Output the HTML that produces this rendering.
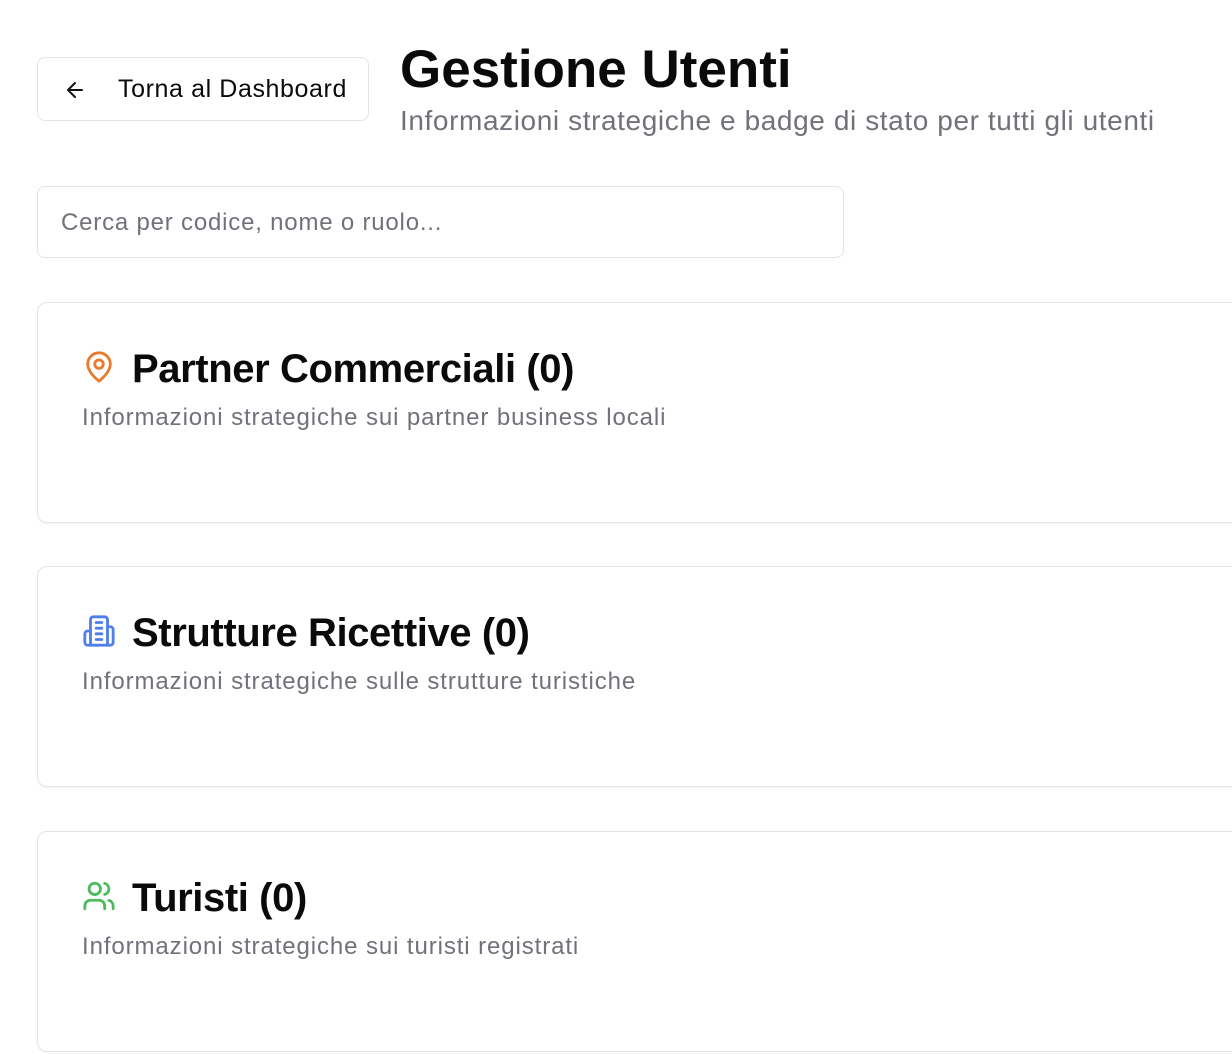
<!DOCTYPE html>
<html><head><meta charset="utf-8"><style>
body{margin:0;background:#fff;font-family:"Liberation Sans",sans-serif;color:#0a0a0a;width:1232px;height:1054px;overflow:hidden;position:relative}
.btn{position:absolute;left:37px;top:57px;width:332px;height:64px;border:1px solid #e4e4e7;border-radius:8px;box-sizing:border-box}
.btn svg{position:absolute;left:25px;top:20px}
.btn span{position:absolute;left:80px;top:17px;font-size:25px;letter-spacing:0.6px}
h1{position:absolute;left:400px;top:39px;margin:0;font-size:53px;font-weight:700;letter-spacing:0px}
.sub{position:absolute;left:400px;top:105px;font-size:28px;color:#71717a;letter-spacing:0.6px}
.search{position:absolute;left:37px;top:186px;width:807px;height:72px;border:1px solid #e4e4e7;border-radius:8px;box-sizing:border-box;font-size:24px;color:#71717a;padding:22px 0 0 23px;letter-spacing:0.8px}
.card{position:absolute;left:37px;width:1220px;height:221px;border:1px solid #e4e4e7;border-radius:10px;box-sizing:border-box;box-shadow:0 1px 2px rgba(0,0,0,.05)}
.card svg{position:absolute;left:44px;top:47px}
.card .t{position:absolute;left:94px;top:44px;font-size:40px;font-weight:700;letter-spacing:-0.4px}
.card .d{position:absolute;left:44px;top:101px;font-size:24px;color:#71717a;letter-spacing:0.9px}
</style></head><body>
<div class="btn"><svg width="24" height="24" viewBox="0 0 24 24" fill="none" stroke="#111" stroke-width="2" stroke-linecap="round" stroke-linejoin="round"><path d="M19 12H5M12 19l-7-7 7-7"/></svg><span>Torna al Dashboard</span></div>
<h1>Gestione Utenti</h1>
<div class="sub">Informazioni strategiche e badge di stato per tutti gli utenti</div>
<div class="search">Cerca per codice, nome o ruolo...</div>

<div class="card" style="top:302px"><svg width="34" height="34" viewBox="0 0 24 24" fill="none" stroke="#ea7a2e" stroke-width="2" stroke-linecap="round" stroke-linejoin="round"><path d="M20 10c0 6-8 12-8 12s-8-6-8-12a8 8 0 0 1 16 0Z"/><circle cx="12" cy="10" r="3"/></svg><div class="t">Partner Commerciali (0)</div><div class="d">Informazioni strategiche sui partner business locali</div></div>

<div class="card" style="top:566px"><svg width="34" height="34" viewBox="0 0 24 24" fill="none" stroke="#4f7fe8" stroke-width="2" stroke-linecap="round" stroke-linejoin="round"><path d="M6 22V4a2 2 0 0 1 2-2h8a2 2 0 0 1 2 2v18Z"/><path d="M6 12H4a2 2 0 0 0-2 2v6a2 2 0 0 0 2 2h2"/><path d="M18 9h2a2 2 0 0 1 2 2v9a2 2 0 0 1-2 2h-2"/><path d="M10 6h4M10 10h4M10 14h4M10 18h4"/></svg><div class="t">Strutture Ricettive (0)</div><div class="d">Informazioni strategiche sulle strutture turistiche</div></div>

<div class="card" style="top:831px"><svg width="34" height="34" viewBox="0 0 24 24" fill="none" stroke="#4cbb5e" stroke-width="2" stroke-linecap="round" stroke-linejoin="round"><path d="M16 21v-2a4 4 0 0 0-4-4H6a4 4 0 0 0-4 4v2"/><circle cx="9" cy="7" r="4"/><path d="M22 21v-2a4 4 0 0 0-3-3.87M16 3.13a4 4 0 0 1 0 7.75"/></svg><div class="t">Turisti (0)</div><div class="d">Informazioni strategiche sui turisti registrati</div></div>
</body></html>
